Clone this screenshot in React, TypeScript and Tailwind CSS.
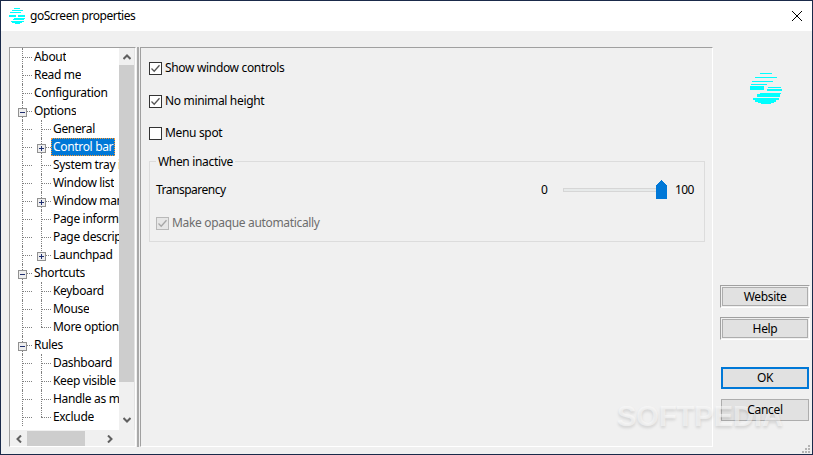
const LOGO_BARS = [
  [10, 0, 12, 1],
  [5, 4, 22, 1],
  [2, 8, 21, 1],
  [1, 11, 16, 1],
  [0, 13, 14, 1],
  [0, 14, 14, 3],
  [18, 14, 13, 1],
  [17, 16, 15, 2],
  [10, 20, 21, 1],
  [7, 21, 23, 3],
  [3, 25, 26, 2],
  [5, 27, 21, 2],
  [8, 29, 16, 1],
  [11, 30, 10, 1],
];

const Logo = ({ className }: { className: string }) => (
  <svg viewBox="0 0 32 31" className={className} shapeRendering="crispEdges">
    {LOGO_BARS.map(([x, y, w, h], i) => (
      <rect key={i} x={x} y={y} width={w} height={h} fill="#00ffff" />
    ))}
  </svg>
);

interface TreeItem {
  label: string;
  level: 1 | 2;
  expander?: 'plus' | 'minus';
  selected?: boolean;
  last?: boolean;
}

const TREE: TreeItem[] = [
  { label: 'About', level: 1 },
  { label: 'Read me', level: 1 },
  { label: 'Configuration', level: 1 },
  { label: 'Options', level: 1, expander: 'minus' },
  { label: 'General', level: 2 },
  { label: 'Control bar', level: 2, expander: 'plus', selected: true },
  { label: 'System tray icon', level: 2 },
  { label: 'Window list', level: 2 },
  { label: 'Window manager', level: 2, expander: 'plus' },
  { label: 'Page information', level: 2 },
  { label: 'Page description', level: 2 },
  { label: 'Launchpad', level: 2, expander: 'plus', last: true },
  { label: 'Shortcuts', level: 1, expander: 'minus' },
  { label: 'Keyboard', level: 2 },
  { label: 'Mouse', level: 2 },
  { label: 'More options', level: 2, last: true },
  { label: 'Rules', level: 1, expander: 'minus' },
  { label: 'Dashboard', level: 2 },
  { label: 'Keep visible', level: 2 },
  { label: 'Handle as maximized', level: 2 },
  { label: 'Exclude', level: 2, last: true },
];

const Expander = ({ type, className }: { type: 'plus' | 'minus'; className: string }) => (
  <span
    className={`absolute w-[9px] h-[9px] border border-[#919191] bg-[#eeeeee] flex items-center justify-center ${className}`}
  >
    <span className="relative w-[5px] h-[1px] bg-[#1f2f6f]">
      {type === 'plus' && <span className="absolute left-[2px] top-[-2px] w-[1px] h-[5px] bg-[#1f2f6f]" />}
    </span>
  </span>
);

const TreeRow = ({ item }: { item: TreeItem }) => (
  <div className="relative h-[18px] whitespace-nowrap">
    <span className="absolute left-[12px] top-0 bottom-0 border-l border-dotted border-[#808080]" />
    <span className="absolute left-[12px] top-[9px] w-[10px] border-t border-dotted border-[#808080]" />
    {item.level === 2 && (
      <>
        <span
          className={`absolute left-[31px] top-0 border-l border-dotted border-[#808080] ${item.last ? 'h-[9px]' : 'h-[18px]'}`}
        />
        <span className="absolute left-[31px] top-[9px] w-[10px] border-t border-dotted border-[#808080]" />
      </>
    )}
    {item.expander &&
      (item.level === 1 ? (
        <Expander type={item.expander} className="left-[8px] top-[6px]" />
      ) : (
        <Expander type={item.expander} className="left-[27px] top-[6px]" />
      ))}
    <span
      className={`absolute top-0 h-[18px] leading-[17px] overflow-hidden ${
        item.level === 1 ? 'left-[24px]' : 'left-[41px]'
      } ${
        item.selected
          ? 'w-[64px] pl-[2px] bg-[#0078d7] text-white outline-1 outline-dotted outline-offset-[-1px] outline-[#ff9a2e]'
          : item.level === 1
            ? 'text-black'
            : 'pl-[2px] text-black'
      }`}
    >
      {item.label}
    </span>
  </div>
);

const Chevron = ({ d }: { d: string }) => (
  <svg viewBox="0 0 8 8" className="w-[8px] h-[8px]" fill="none" stroke="#606060" strokeWidth="2">
    <path d={d} />
  </svg>
);

const Tree = () => (
  <div className="w-[127px] h-[400px] border-t border-l border-t-[#a0a0a0] border-l-[#a0a0a0] border-r border-r-white border-b border-b-white flex flex-col">
    <div className="flex-1 flex min-h-0">
      <div className="w-[109px] bg-white overflow-hidden">
        {TREE.map((item) => (
          <TreeRow key={item.label} item={item} />
        ))}
      </div>
      <div className="w-[15px] flex flex-col">
        <div className="h-[17px] flex items-center justify-center">
          <Chevron d="M0.5 6 L4 2.5 L7.5 6" />
        </div>
        <div className="h-[317px] bg-[#cdcdcd]" />
        <div className="flex-1 flex items-end justify-center pb-[6px]">
          <Chevron d="M0.5 2 L4 5.5 L7.5 2" />
        </div>
      </div>
      <div className="w-[1px] bg-[#e3e3e3]" />
    </div>
    <div className="h-[16px] flex items-center border-t border-[#f0f0f0]">
      <div className="w-[17px] flex justify-center">
        <Chevron d="M6 0.5 L2.5 4 L6 7.5" />
      </div>
      <div className="w-[58px] h-[15px] bg-[#cdcdcd]" />
      <div className="w-[34px] flex justify-end pr-[5px]">
        <Chevron d="M2 0.5 L5.5 4 L2 7.5" />
      </div>
    </div>
  </div>
);

const Checkbox = ({ checked, disabled }: { checked?: boolean; disabled?: boolean }) => (
  <span
    className={`w-[13px] h-[13px] border flex items-center justify-center shrink-0 ${
      disabled ? 'border-[#b8b8b8] bg-[#e6e6e6]' : 'border-[#333333] bg-white'
    }`}
  >
    {checked && (
      <svg viewBox="0 0 11 11" className="w-[11px] h-[11px]" fill="none" stroke={disabled ? '#a6a6a6' : '#555555'} strokeWidth="1.3">
        <path d="M1.5 5.5 L4.2 8.2 L9.5 2.2" />
      </svg>
    )}
  </span>
);

const CheckRow = ({ label, checked, className }: { label: string; checked?: boolean; className: string }) => (
  <div className={`h-[18px] flex items-center gap-[3px] ${className}`}>
    <Checkbox checked={checked} />
    <span>{label}</span>
  </div>
);

const Slider = () => (
  <div className="relative w-[104px] h-[20px] flex items-center">
    <div className="w-full h-[4px] bg-[#e7eaea] border border-[#d6d6d6]" />
    <svg viewBox="0 0 11 19" className="absolute right-0 top-0 w-[11px] h-[19px]" shapeRendering="crispEdges">
      <path d="M0 5 L5.5 0 L11 5 V19 H0 Z" fill="#0078d7" />
    </svg>
  </div>
);

const SideButton = ({ label }: { label: string }) => (
  <div className="w-[90px] h-[23px] border-t border-l border-[#a0a0a0] border-r-white border-b-white border-r border-b p-[1px]">
    <div className="h-full border border-[#adadad] bg-[#e1e1e1] flex items-center justify-center">{label}</div>
  </div>
);

export default function App() {
  return (
    <div className="relative w-[813px] h-[455px] border border-[#1a2a4a] bg-[#f0f0f0] flex flex-col overflow-hidden font-['Noto_Sans',sans-serif] text-[12px] tracking-[-0.33px] text-black">
      <div className="h-[30px] bg-white flex items-center pl-[8px] pr-[10px] shrink-0">
        <Logo className="w-[16px] h-[16px]" />
        <span className="ml-[5px] text-[12px] tracking-[-0.47px]">goScreen properties</span>
        <svg viewBox="0 0 10 10" className="ml-auto w-[10px] h-[10px]" fill="none" stroke="#000000" strokeWidth="1">
          <path d="M0 0 L10 10 M10 0 L0 10" />
        </svg>
      </div>

      <div className="flex-1 flex pt-[16px] pl-[8px] min-h-0">
        <Tree />
        <div className="ml-[1px] w-[2px] h-[400px] bg-[#a9a9a9]" />
        <div className="ml-[1px] w-[573px] h-[400px] border-t border-l border-t-[#a0a0a0] border-l-[#a0a0a0] border-r border-b border-r-white border-b-white pl-[8px] pt-[11px]">
          <CheckRow label="Show window controls" checked className="" />
          <CheckRow label="No minimal height" checked className="mt-[15px]" />
          <CheckRow label="Menu spot" className="mt-[14px]" />

          <div className="relative mt-[19px] w-[556px] h-[81px] border border-[#dcdcdc] pl-[6px] pr-[11px] pt-[19px]">
            <span className="absolute left-[6px] top-[-9px] px-[2px] bg-[#f0f0f0] leading-[18px]">When inactive</span>
            <div className="flex items-center h-[18px]">
              <span className="flex-1 tracking-[-0.5px]">Transparency</span>
              <span className="w-[22px]">0</span>
              <Slider />
              <span className="ml-[8px] w-[18px] tracking-[-0.6px]">100</span>
            </div>
            <div className="mt-[15px] h-[18px] flex items-center gap-[3px] text-[#6d6d6d]">
              <Checkbox checked disabled />
              <span>Make opaque automatically</span>
            </div>
          </div>
        </div>

        <div className="flex-1 flex flex-col pl-[7px]">
          <div className="pt-[26px] pl-[30px] h-[238px]">
            <Logo className="w-[32px] h-[31px]" />
          </div>
          <SideButton label="Website" />
          <div className="mt-[9px]">
            <SideButton label="Help" />
          </div>
          <div className="mt-[27px] ml-[1px] w-[88px] h-[22px] border-2 border-[#0078d7] bg-[#e1e1e1] flex items-center justify-center">
            OK
          </div>
          <div className="mt-[10px] ml-[1px] w-[88px] h-[22px] border border-[#adadad] bg-[#e1e1e1] flex items-center justify-center">
            <span className="relative z-10">Cancel</span>
          </div>
        </div>
      </div>

      <svg viewBox="0 0 10 9" className="absolute right-[1px] bottom-0 w-[10px] h-[9px]" fill="#b4b4b4" shapeRendering="crispEdges">
        <rect x="7" y="0" width="2" height="2" />
        <rect x="4" y="3" width="2" height="2" />
        <rect x="7" y="3" width="2" height="2" />
        <rect x="1" y="6" width="2" height="2" />
        <rect x="4" y="6" width="2" height="2" />
        <rect x="7" y="6" width="2" height="2" />
      </svg>

      <span className="absolute left-[616px] top-[397px] z-0 pointer-events-none font-['Liberation_Sans',sans-serif] font-bold text-[29px] tracking-normal leading-[36px] text-white/50 [text-shadow:0_2px_3px_rgba(0,0,0,0.12)]">
        SOFTPEDIA
      </span>
    </div>
  );
}
